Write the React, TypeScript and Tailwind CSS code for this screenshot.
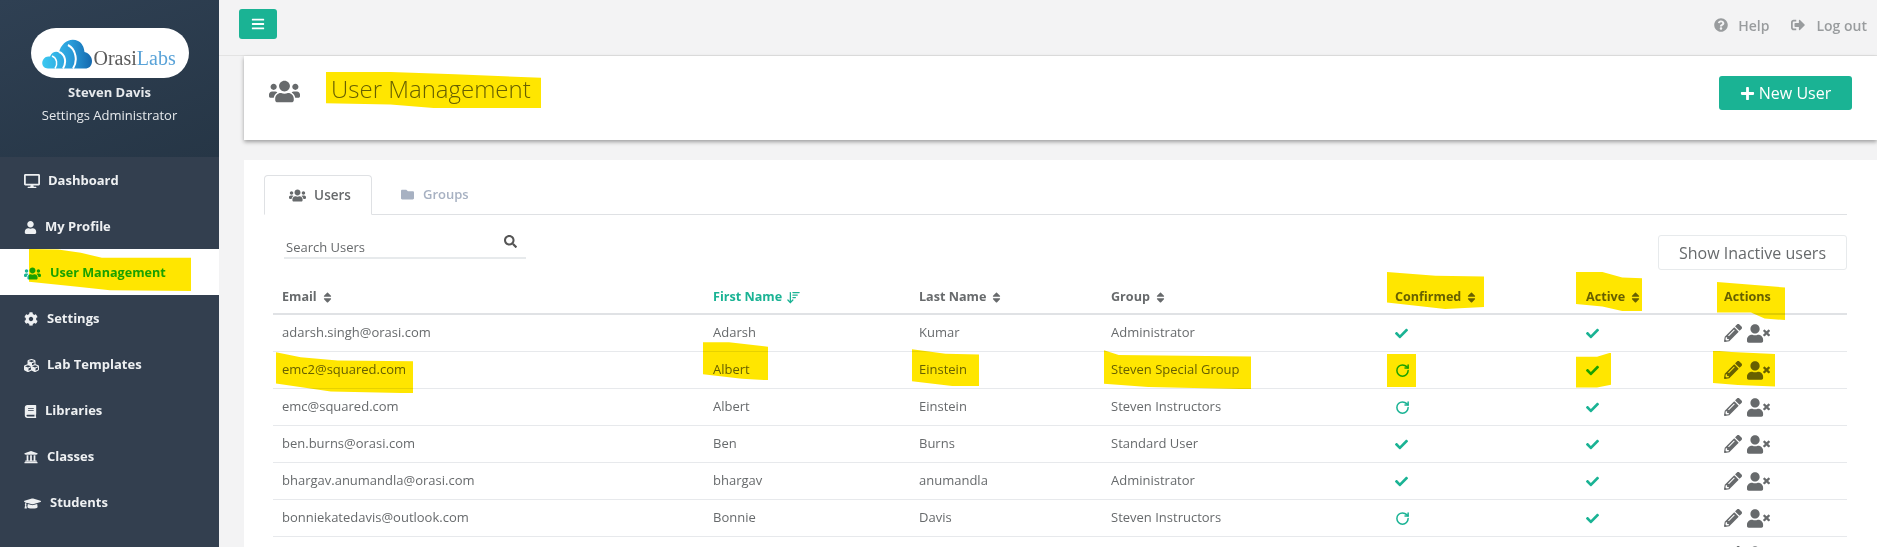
import { ReactNode } from "react";
import {
  FaBars,
  FaBook,
  FaCheck,
  FaCog,
  FaCubes,
  FaDesktop,
  FaFolder,
  FaGraduationCap,
  FaPencilAlt,
  FaPlus,
  FaQuestionCircle,
  FaSearch,
  FaSignOutAlt,
  FaSort,
  FaUniversity,
  FaUser,
  FaUsers,
  FaUserTimes,
} from "react-icons/fa";
import { ArrowDownWideNarrow, RotateCw } from "lucide-react";

const nav = [
  { label: "Dashboard", icon: <FaDesktop className="text-[16px]" />, gap: "w-[24px]" },
  { label: "My Profile", icon: <FaUser className="text-[13px]" />, gap: "w-[21px]" },
  { label: "User Management", icon: <FaUsers className="text-[17px]" />, gap: "w-[26px]", active: true },
  { label: "Settings", icon: <FaCog className="text-[14px]" />, gap: "w-[23px]" },
  { label: "Lab Templates", icon: <FaCubes className="text-[15px]" />, gap: "w-[23px]" },
  { label: "Libraries", icon: <FaBook className="text-[13px]" />, gap: "w-[21px]" },
  { label: "Classes", icon: <FaUniversity className="text-[14px]" />, gap: "w-[23px]" },
  { label: "Students", icon: <FaGraduationCap className="text-[17px]" />, gap: "w-[26px]" },
];

const rows = [
  { email: "adarsh.singh@orasi.com", first: "Adarsh", last: "Kumar", group: "Administrator", confirmed: true },
  { email: "emc2@squared.com", first: "Albert", last: "Einstein", group: "Steven Special Group", confirmed: false, marked: true },
  { email: "emc@squared.com", first: "Albert", last: "Einstein", group: "Steven Instructors", confirmed: false },
  { email: "ben.burns@orasi.com", first: "Ben", last: "Burns", group: "Standard User", confirmed: true },
  { email: "bhargav.anumandla@orasi.com", first: "bhargav", last: "anumandla", group: "Administrator", confirmed: true },
  { email: "bonniekatedavis@outlook.com", first: "Bonnie", last: "Davis", group: "Steven Instructors", confirmed: false },
  { email: "", first: "", last: "", group: "", confirmed: true },
];

// yellow felt pen stroke from the screenshot, multiplied over what is under it
function Marker({ className }: { className: string }) {
  return <span className={`absolute bg-[#ffe600] mix-blend-multiply pointer-events-none ${className}`} />;
}

function Th({ children, sort = true, marker }: { children: ReactNode; sort?: boolean; marker?: string }) {
  return (
    <div className="relative flex items-center gap-[4px] font-bold text-[12.6px] text-[#676a6c]">
      {children}
      {sort && <FaSort className="text-[13px] text-[#676a6c]" />}
      {marker && <Marker className={marker} />}
    </div>
  );
}

function Cell({ children, marker }: { children: ReactNode; marker?: string }) {
  return (
    <div className="relative flex w-fit items-center">
      {children}
      {marker && <Marker className={marker} />}
    </div>
  );
}

function Logo() {
  return (
    <div className="w-[158px] h-[50px] mx-auto bg-white rounded-[25px] flex items-center pl-[11px]">
      <svg width="50" height="30" viewBox="0 0 50 30" className="mt-[2px]">
        <defs>
          <linearGradient id="cloud" x1="0" x2="1" y1="0" y2="0">
            <stop offset="0" stopColor="#3cc8f0" />
            <stop offset="0.55" stopColor="#2a9fdc" />
            <stop offset="1" stopColor="#1468ae" />
          </linearGradient>
        </defs>
        <path d="M6 29.5 C1 29.5 -1 25 1 21 C2.500 18 5 17 8 17.500 C10 13 14 12 17 13.500 C19 4 28 -2 36 2 C40 4 42 8 42.500 13 C47 14 50 18 50 22 C50 27 47 29.500 43 29.500 Z" fill="url(#cloud)" />
        <path d="M10 17 C15 19 16 25 13 29.500" fill="none" stroke="#ffffff" strokeWidth="1.500" />
        <path d="M17 13 C23 15 25 23 21 29.500" fill="none" stroke="#ffffff" strokeWidth="2" />
        <path d="M26 6 C34 10 36 22 31 29.500" fill="none" stroke="#ffffff" strokeWidth="2" />
      </svg>
      <span className="ml-[2px] mt-[9px] text-[20px] leading-[24px] font-['Liberation_Serif',serif] text-[#5b5b5b]">
        Orasi<span className="text-[#5aa3d8]">Labs</span>
      </span>
    </div>
  );
}

function Sidebar() {
  return (
    <aside className="w-[219px] shrink-0 h-full bg-[#333f4f] flex flex-col">
      <div className="h-[157px] pt-[28px] bg-[linear-gradient(160deg,#2f4053,#263646)] text-center text-[#e6e9ec]">
        <Logo />
        <div className="mt-[5px] text-[13px] leading-[18px] font-bold">Steven Davis</div>
        <div className="mt-[5px] text-[13px] leading-[18px]">Settings Administrator</div>
      </div>
      {nav.map((item) => (
        <div
          key={item.label}
          className={`relative h-[46px] shrink-0 flex items-center pl-[24px] pt-[2px] font-bold ${
            item.active ? "bg-white text-[#1ab394] text-[12.6px]" : "text-[#eef0f2] text-[13px]"
          }`}
        >
          <span className={`${item.gap} flex items-center`}>{item.icon}</span>
          {item.label}
          {item.active && (
            <Marker className="left-[29px] top-0 w-[162px] h-[42px] [clip-path:polygon(0_0,18%_1%,32%_9%,45%_21%,100%_21%,100%_100%,50%_98%,30%_90%,0_78%)]" />
          )}
        </div>
      ))}
    </aside>
  );
}

function Row({ row }: { row: (typeof rows)[number] }) {
  const m = row.marked;
  return (
    <div className="grid grid-cols-[431px_206px_192px_284px_191px_135px_1fr] h-[37px] shrink-0 items-center border-b border-[#e7e9ec] pl-[9px] text-[13px] text-[#676a6c]">
      <div>
        <Cell marker={m ? "-left-[6px] -top-[8px] w-[137px] h-[41px] [clip-path:polygon(0_0,18%_12%,45%_20%,100%_22%,100%_100%,40%_96%,0_76%)]" : undefined}>{row.email}</Cell>
      </div>
      <div>
        <Cell marker={m ? "-left-[10px] -top-[18px] w-[65px] h-[38px] [clip-path:polygon(0_0,40%_0,100%_12%,100%_100%,60%_96%,0_84%)]" : undefined}>{row.first}</Cell>
      </div>
      <div>
        <Cell marker={m ? "-left-[7px] -top-[11px] w-[67px] h-[38px] [clip-path:polygon(0_0,50%_12%,100%_14%,100%_97%,60%_97%,0_84%)]" : undefined}>{row.last}</Cell>
      </div>
      <div>
        <Cell marker={m ? "-left-[7px] -top-[10px] w-[147px] h-[39px] [clip-path:polygon(0_0,10%_12%,100%_16%,100%_100%,30%_94%,0_86%)]" : undefined}>{row.group}</Cell>
      </div>
      <div>
        <Cell marker={m ? "-left-[8px] -top-[9px] w-[29px] h-[33px]" : undefined}>
          {row.confirmed ? <FaCheck className="text-[13px] text-[#1ab394]" /> : <RotateCw className="w-[15px] h-[15px] text-[#1ab394]" strokeWidth={2.4} />}
        </Cell>
      </div>
      <div>
        <Cell marker={m ? "-left-[10px] -top-[11px] w-[35px] h-[35px] [clip-path:polygon(0_12%,60%_12%,100%_0,100%_92%,60%_100%,0_100%)]" : undefined}>
          <FaCheck className="text-[13px] text-[#1ab394]" />
        </Cell>
      </div>
      <div className="pl-[3px]">
        <Cell marker={m ? "-left-[11px] -top-[8px] w-[62px] h-[36px] [clip-path:polygon(0_0,30%_4%,100%_10%,100%_100%,40%_96%,0_90%)]" : undefined}>
          <FaPencilAlt className="text-[18px] text-[#676a6c]" />
          <FaUserTimes className="ml-[5px] text-[23px] text-[#676a6c]" />
        </Cell>
      </div>
    </div>
  );
}

export default function App() {
  return (
    <div className="h-screen w-screen flex overflow-hidden bg-[#f3f3f4] font-['Open_Sans',sans-serif] text-[#676a6c]">
      <Sidebar />
      <main className="flex-1 min-w-0 h-full flex flex-col">
        <header className="h-[56px] shrink-0 border-b border-[#e3e3e3] flex items-center justify-between pl-[20px] pr-[10px] pb-[5px]">
          <button className="w-[38px] h-[30px] -mt-[3px] rounded-[3px] bg-[#1ab394] text-white flex items-center justify-center">
            <FaBars className="text-[14px]" />
          </button>
          <div className="flex items-center text-[14px] font-semibold text-[#999c9e]">
            <FaQuestionCircle className="text-[14px] mr-[10px]" />
            Help
            <FaSignOutAlt className="text-[14px] ml-[22px] mr-[11px]" />
            Log out
          </div>
        </header>

        <section className="ml-[25px] h-[84px] shrink-0 bg-white shadow-[0_2px_4px_rgba(0,0,0,0.35)] flex justify-between pl-[25px] pr-[25px]">
          <div className="flex">
            <FaUsers className="mt-[20px] text-[31px] text-[#676a6c]" />
            <h1 className="relative ml-[31px] mt-[13px] h-[40px] text-[24px] leading-[40px] font-light">
              User Management
              <Marker className="-left-[5px] top-[3px] w-[215px] h-[36px] [clip-path:polygon(0_0,30%_0,60%_6%,100%_16%,100%_100%,50%_100%,30%_90%,0_87%)]" />
            </h1>
          </div>
          <button className="mt-[20px] w-[133px] h-[34px] rounded-[3px] bg-[#1ab394] text-white text-[16px] flex items-center justify-center gap-[4px]">
            <FaPlus className="text-[15px]" />
            New User
          </button>
        </section>

        <section className="ml-[25px] mt-[20px] flex-1 min-h-0 bg-white pt-[15px] pl-[20px] pr-[30px] overflow-hidden">
          <div className="h-[40px] border-b border-[#dfe1e4] flex">
            <div className="w-[108px] h-[40px] pl-[4px] bg-white border border-b-white border-[#dfe1e4] rounded-t-[4px] flex items-center justify-center gap-[8px] text-[13.5px] font-semibold">
              <FaUsers className="text-[17px]" />
              Users
            </div>
            <div className="ml-[29px] flex items-center gap-[9px] text-[13px] font-semibold text-[#a7b1c2]">
              <FaFolder className="text-[13px]" />
              Groups
            </div>
          </div>

          <div className="ml-[9px] flex justify-between items-start">
            <div className="ml-[11px] mt-[20px] w-[242px] h-[24px] border-b-2 border-[#e7eaec] flex justify-between pr-[9px] text-[13px]">
              <span className="pt-[3px] pl-[2px]">Search Users</span>
              <FaSearch className="text-[13px] text-[#555]" />
            </div>
            <button className="mt-[20px] w-[189px] h-[35px] rounded-[3px] border border-[#e7eaec] text-[16px] text-[#676a6c]">Show Inactive users</button>
          </div>

          <div className="ml-[9px] flex flex-col">
            <div className="grid grid-cols-[431px_206px_192px_284px_191px_135px_1fr] h-[45px] shrink-0 items-end pb-[6px] border-b-2 border-[#e0e2e5] pl-[9px]">
              <Th>Email</Th>
              <div className="flex items-center gap-[4px] font-bold text-[12.6px] text-[#1ab394]">
                First Name
                <ArrowDownWideNarrow className="w-[15px] h-[15px]" />
              </div>
              <Th>Last Name</Th>
              <Th>Group</Th>
              <div>
                <Th marker="-left-[8px] -top-[16px] w-[97px] h-[37px] [clip-path:polygon(0_0,50%_10%,100%_12%,100%_94%,60%_100%,0_82%)]">Confirmed</Th>
              </div>
              <div>
                <Th marker="-left-[10px] -top-[16px] w-[66px] h-[39px] [clip-path:polygon(0_0,40%_0,70%_14%,100%_16%,100%_100%,70%_100%,40%_88%,0_82%)]">Active</Th>
              </div>
              <div className="pl-[3px]">
                <Th sort={false} marker="-left-[7px] -top-[6px] w-[68px] h-[38px] [clip-path:polygon(0_0,100%_14%,100%_100%,70%_96%,50%_80%,0_80%)]">Actions</Th>
              </div>
            </div>
            {rows.map((row, i) => (
              <Row key={i} row={row} />
            ))}
          </div>
        </section>
      </main>
    </div>
  );
}
